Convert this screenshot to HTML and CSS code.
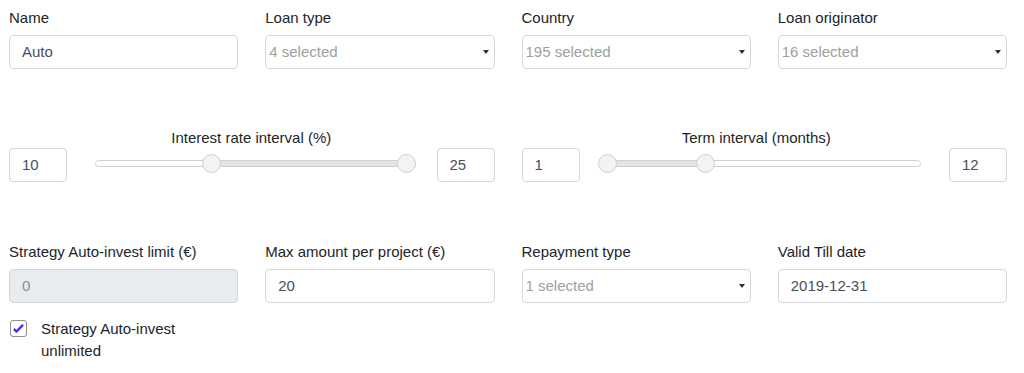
FILE: index.html
```html
<!DOCTYPE html>
<html lang="en">
  <head>
    <meta charset="UTF-8" />
    <meta name="viewport" content="width=device-width, initial-scale=1.0" />
    <title>Auto-invest strategy</title>
    <link rel="stylesheet" href="styles.css">
  </head>
  <body>
    <form class="strategy-form">
      <!-- First row: name and multi-selects -->
      <div class="form-row">
        <div class="field">
          <label class="field-label">Name</label>
          <div class="input">Auto</div>
        </div>
        <div class="field">
          <label class="field-label">Loan type</label>
          <div class="input select placeholder">4 selected<span class="caret"></span></div>
        </div>
        <div class="field">
          <label class="field-label">Country</label>
          <div class="input select placeholder">195 selected<span class="caret"></span></div>
        </div>
        <div class="field">
          <label class="field-label">Loan originator</label>
          <div class="input select placeholder">16 selected<span class="caret"></span></div>
        </div>
      </div>

      <!-- Range sliders -->
      <div class="range-row">
        <div class="range-field">
          <div class="input small">10</div>
          <div class="slider slider-left">
            <div class="slider-label">Interest rate interval (%)</div>
            <div class="slider-track-wrap">
              <div class="slider-track">
                <div class="slider-fill" style="left: 36.4%; width: 61.1%;"></div>
                <span class="thumb" style="left: 36.4%;"></span>
                <span class="thumb" style="left: 97.5%;"></span>
              </div>
            </div>
          </div>
          <div class="input small">25</div>
        </div>
        <div class="range-field">
          <div class="input small">1</div>
          <div class="slider slider-right">
            <div class="slider-label">Term interval (months)</div>
            <div class="slider-track-wrap">
              <div class="slider-track">
                <div class="slider-fill" style="left: 2.2%; width: 30.8%;"></div>
                <span class="thumb" style="left: 2.2%;"></span>
                <span class="thumb" style="left: 33%;"></span>
              </div>
            </div>
          </div>
          <div class="input small">12</div>
        </div>
      </div>

      <!-- Limits row -->
      <div class="form-row limits-row">
        <div class="field">
          <label class="field-label">Strategy Auto-invest limit (€)</label>
          <div class="input disabled">0</div>
          <label class="check">
            <span class="check-box">
              <svg width="13" height="13" viewBox="0 0 13 13">
                <path d="M2.6 7.6 L4.4 9.6 L10.4 3.4" fill="none" stroke="#4638e0" stroke-width="2.4" stroke-linecap="round" stroke-linejoin="round"/>
              </svg>
            </span>
            <span class="check-text">Strategy Auto-invest unlimited</span>
          </label>
        </div>
        <div class="field">
          <label class="field-label">Max amount per project (€)</label>
          <div class="input">20</div>
        </div>
        <div class="field">
          <label class="field-label">Repayment type</label>
          <div class="input select placeholder">1 selected<span class="caret"></span></div>
        </div>
        <div class="field">
          <label class="field-label">Valid Till date</label>
          <div class="input">2019-12-31</div>
        </div>
      </div>
    </form>
  </body>
</html>
```

FILE: styles.css
```css
body {
  margin: 0;
  padding: 0;
  font-family: 'Liberation Sans', Arial, sans-serif;
  font-size: 15px;
  color: #212529;
  background-color: #ffffff;
}

.strategy-form {
  padding: 8px 17px 0 9px;
}

/* Four column rows */
.form-row {
  display: grid;
  grid-template-columns: repeat(4, 1fr);
  column-gap: 27px;
}

.field-label {
  display: block;
  line-height: 20px;
  margin-bottom: 7px;
}

.input {
  position: relative;
  box-sizing: border-box;
  height: 34px;
  line-height: 32px;
  padding: 0 12px;
  border: 1px solid #d3d6da;
  border-radius: 4px;
  color: #495057;
  background-color: #ffffff;
}

.input.disabled {
  background-color: #e9ecef;
  color: #8a8f94;
}

.input.select {
  padding-left: 3px;
}

.input.placeholder {
  color: #a0a0a0;
}

.caret {
  position: absolute;
  right: 5px;
  top: 14px;
  width: 0;
  height: 0;
  border-left: 3.5px solid transparent;
  border-right: 3.5px solid transparent;
  border-top: 4px solid #333333;
}

/* Range sliders */
.range-row {
  display: grid;
  grid-template-columns: 1fr 1fr;
  column-gap: 27px;
  margin-top: 59px;
}

.range-field {
  display: flex;
  align-items: flex-end;
}

.input.small {
  width: 58px;
  flex-shrink: 0;
}

.slider {
  flex: 1;
  margin-bottom: 4px;
}

.slider-left {
  margin-left: 28px;
  margin-right: 21px;
}

.slider-right {
  margin-left: 20px;
  margin-right: 28px;
}

.slider-label {
  line-height: 20px;
  text-align: center;
  padding-right: 8px;
}

.slider-track-wrap {
  height: 30px;
  display: flex;
  align-items: center;
}

.slider-track {
  position: relative;
  width: 100%;
  height: 7px;
  box-sizing: border-box;
  border: 1px solid #d0d0d0;
  border-radius: 4px;
  background-color: #ffffff;
}

.slider-fill {
  position: absolute;
  top: 0;
  bottom: 0;
  background-color: #e4e4e4;
}

.thumb {
  position: absolute;
  top: 50%;
  width: 17px;
  height: 17px;
  margin: -9.5px 0 0 -9.5px;
  border: 1px solid #d0d0d0;
  border-radius: 50%;
  background-color: #f3f3f3;
}

/* Limits row */
.limits-row {
  margin-top: 60px;
}

.check {
  display: flex;
  align-items: flex-start;
  margin-top: 15px;
}

.check-box {
  box-sizing: border-box;
  width: 17px;
  height: 17px;
  margin: 2px 0 0 1px;
  border: 1px solid #8e8e93;
  border-radius: 3px;
  display: flex;
  align-items: center;
  justify-content: center;
  flex-shrink: 0;
}

.check-text {
  margin-left: 14px;
  max-width: 150px;
  line-height: 22px;
}
```
